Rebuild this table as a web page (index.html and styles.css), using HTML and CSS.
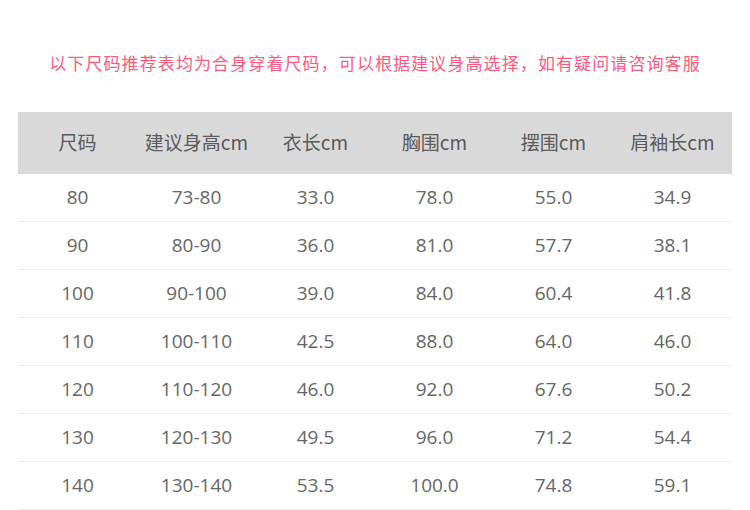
FILE: index.html
```html
<!DOCTYPE html>
<html lang="zh">
<head>
<meta charset="utf-8">
<link rel="stylesheet" href="styles.css">
</head>
<body>
<div class="page">
  <p class="note">以下尺码推荐表均为合身穿着尺码，可以根据建议身高选择，如有疑问请咨询客服</p>
  <table class="size-table">
    <thead>
      <tr><th>尺码</th><th>建议身高cm</th><th>衣长cm</th><th>胸围cm</th><th>摆围cm</th><th>肩袖长cm</th></tr>
    </thead>
    <tbody>
      <tr><td>80</td><td>73-80</td><td>33.0</td><td>78.0</td><td>55.0</td><td>34.9</td></tr>
      <tr><td>90</td><td>80-90</td><td>36.0</td><td>81.0</td><td>57.7</td><td>38.1</td></tr>
      <tr><td>100</td><td>90-100</td><td>39.0</td><td>84.0</td><td>60.4</td><td>41.8</td></tr>
      <tr><td>110</td><td>100-110</td><td>42.5</td><td>88.0</td><td>64.0</td><td>46.0</td></tr>
      <tr><td>120</td><td>110-120</td><td>46.0</td><td>92.0</td><td>67.6</td><td>50.2</td></tr>
      <tr><td>130</td><td>120-130</td><td>49.5</td><td>96.0</td><td>71.2</td><td>54.4</td></tr>
      <tr><td>140</td><td>130-140</td><td>53.5</td><td>100.0</td><td>74.8</td><td>59.1</td></tr>
    </tbody>
  </table>
</div>
</body>
</html>
```
FILE: styles.css
```css
html, body {
  margin: 0;
  padding: 0;
  background: #fff;
}
.page {
  width: 750px;
  height: 510px;
  overflow: hidden;
  padding: 0 18px;
  box-sizing: border-box;
  font-family: "Open Sans", "Noto Sans CJK SC", sans-serif;
}
.note {
  margin: 0;
  padding-top: 50px;
  height: 62px;
  box-sizing: border-box;
  text-align: center;
  color: #fb5a7e;
  font-size: 17px;
  line-height: 26px;
  font-family: "Noto Sans CJK SC", sans-serif;
  letter-spacing: 1.1px;
}
.size-table {
  margin-top: 50px;
  width: 714px;
  border-collapse: collapse;
  table-layout: fixed;
}
.size-table th {
  background: #d9d9d9;
  height: 58px;
  padding: 0 0 4px;
  font-weight: normal;
  font-size: 19px;
  color: #5a5a5a;
  text-align: center;
  font-family: "Noto Sans CJK SC", sans-serif;
}
.size-table td {
  height: 45px;
  padding: 0 0 2px;
  text-align: center;
  font-size: 19px;
  color: #666;
  border-bottom: 1px solid #ececec;
}
```
